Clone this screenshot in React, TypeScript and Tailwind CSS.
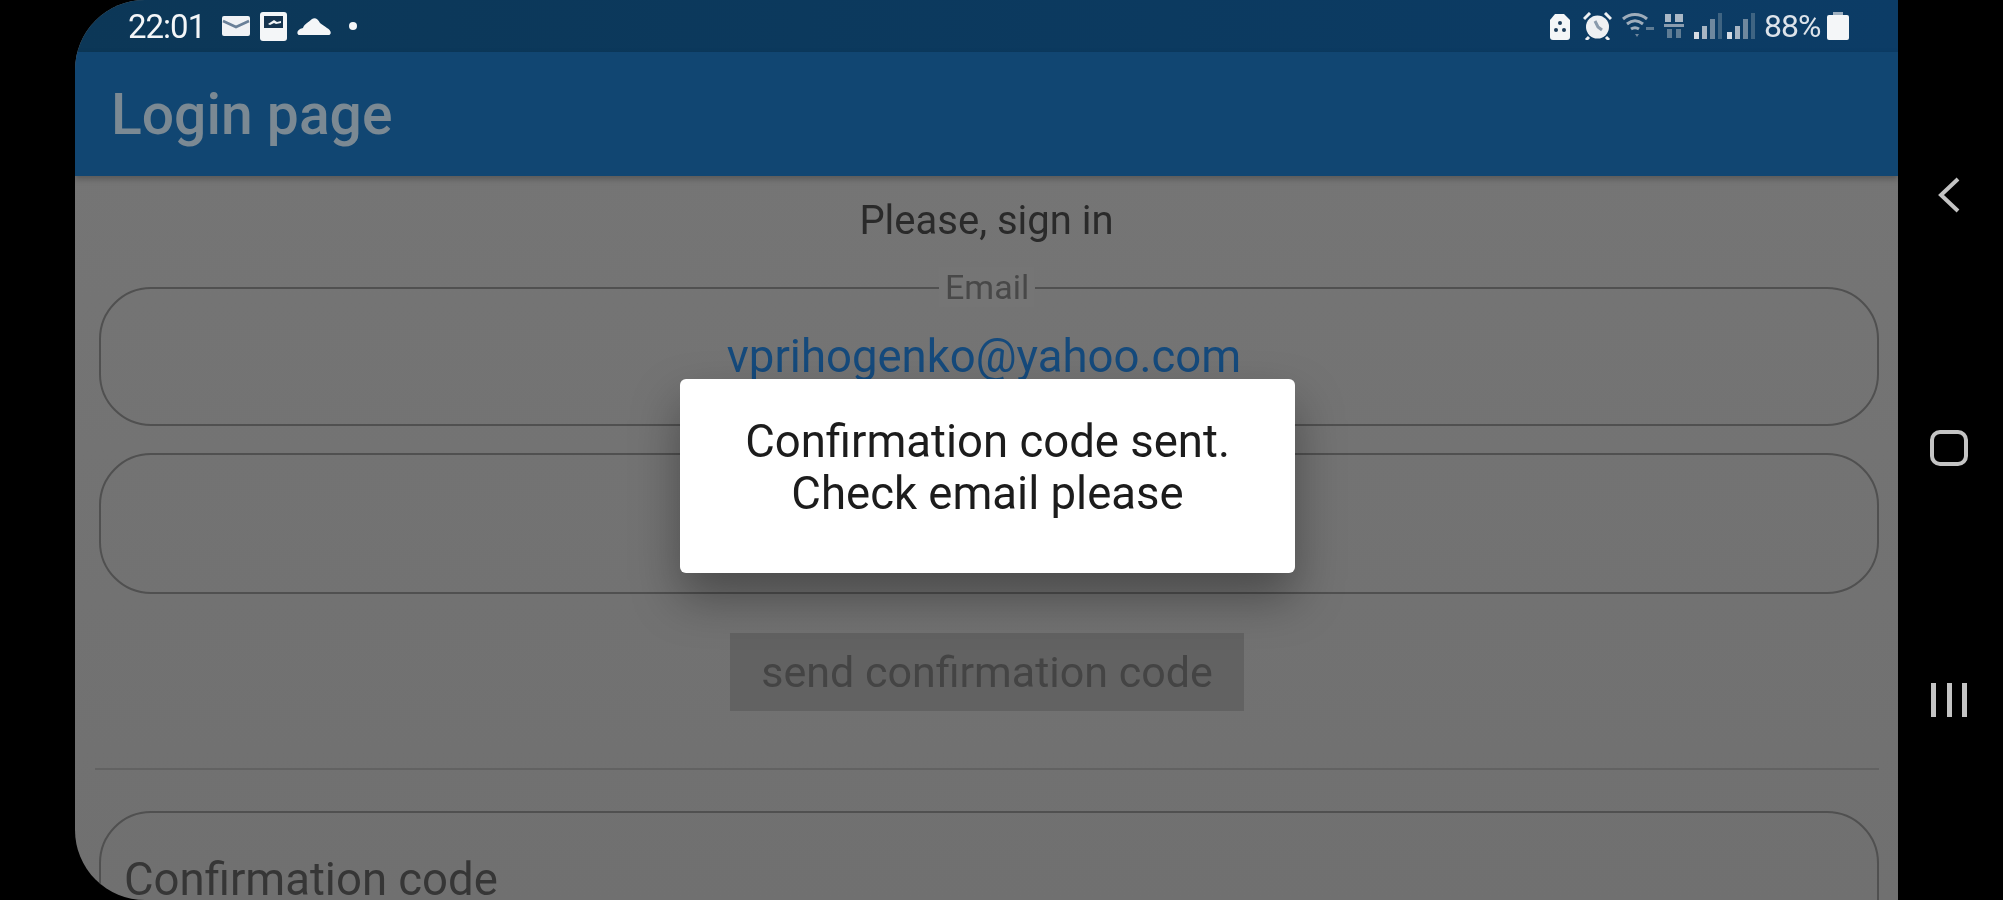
const roboto = "font-['Roboto',sans-serif]";

function Mail() {
  return (
    <svg width="28" height="20" viewBox="0 0 28 20" className="ml-[17px]">
      <rect width="28" height="20" rx="2" fill="#f0f2f5" />
      <path d="M1 5l13 6 13-6" fill="none" stroke="#6a8098" strokeWidth="2.5" />
    </svg>
  );
}

function Picture() {
  return (
    <svg width="27" height="29" viewBox="0 0 27 29" className="ml-[10px]">
      <rect width="27" height="29" rx="3" fill="#f4f6f8" />
      <rect x="4" y="4" width="19" height="12" fill="#16344f" />
      <path d="M8 12l6-4 3 2 4-1v2l-5 1-2-1-4 2z" fill="#f4f6f8" />
    </svg>
  );
}

function Cloud() {
  return (
    <svg width="34" height="18" viewBox="0 0 34 18" className="ml-[10px]">
      <path d="M2 18c-3-1-2-6 4-7 1-4 5-5 9-9 3-2 6 0 8 4 2 2 5 3 7 5 4 2 5 6 2 7z" fill="#f4f6f8" />
    </svg>
  );
}

function Lock() {
  return (
    <svg width="22" height="27" viewBox="0 0 22 27">
      <path d="M6 1h9l6 6v17a3 3 0 0 1-3 3H4a3 3 0 0 1-3-3V7z" fill="#f4f6f8" />
      <circle cx="11" cy="10" r="2" fill="#1c3c5a" />
      <circle cx="7" cy="17" r="2" fill="#1c3c5a" />
      <circle cx="15" cy="17" r="2" fill="#1c3c5a" />
    </svg>
  );
}

function Alarm() {
  return (
    <svg width="29" height="28" viewBox="0 0 29 28" className="ml-[12px]">
      <circle cx="14.5" cy="15" r="11.5" fill="#eef0f3" />
      <path d="M12 9l3 6 4 3" fill="none" stroke="#8a9aac" strokeWidth="3" />
      <path d="M1 7l6-6M28 7l-6-6M6 25l-3 3M23 25l3 3" stroke="#eef0f3" strokeWidth="3" />
    </svg>
  );
}

function Wifi() {
  return (
    <svg width="33" height="26" viewBox="0 0 33 26" className="ml-[10px]">
      <path d="M1 6c7-6 17-6 24 0M5 11c5-4 11-4 16 0M9 16c3-2 5-2 8 0" fill="none" stroke="#9fadbb" strokeWidth="3" />
      <path d="M13 21l2 3 2-3z" fill="#6f869c" />
      <rect x="24" y="14" width="8" height="3" fill="#5f7c94" />
    </svg>
  );
}

function FourG() {
  return (
    <svg width="22" height="28" viewBox="0 0 22 28" className="ml-[8px]">
      <path d="M2 2h6v8H2zM12 2h8v8h-8z" fill="#aab8c6" />
      <path d="M1 12h20v3H1z" fill="#8a9cae" />
      <path d="M4 17h5v9H4zM13 17h5v9h-5z" fill="#5f7c94" />
    </svg>
  );
}

function Signal({ className }: { className: string }) {
  return (
    <svg width="28" height="26" viewBox="0 0 28 26" className={className}>
      <rect x="0" y="19" width="5" height="7" fill="#d6dce4" />
      <rect x="8" y="13" width="5" height="13" fill="#a8b6c4" />
      <rect x="16" y="6" width="5" height="20" fill="#6f889e" />
      <rect x="24" y="0" width="4" height="26" fill="#3f6482" />
    </svg>
  );
}

function Battery() {
  return (
    <svg width="22" height="28" viewBox="0 0 22 28" className="ml-[4px]">
      <path d="M6 0h10v3H6z" fill="#9fb0c0" />
      <rect y="3" width="22" height="25" rx="2" fill="#f4f6f8" />
    </svg>
  );
}

function StatusBar() {
  return (
    <div className={`flex h-[52px] shrink-0 items-center justify-between bg-gradient-to-r from-[#0c3757] to-[#0c3c66] pl-[53px] pr-[49px] ${roboto}`}>
      <div className="flex items-center">
        <span className="w-[77px] whitespace-nowrap text-[33px] leading-none tracking-[-1px] text-[#f4f6f8]">22:01</span>
        <Mail />
        <Picture />
        <Cloud />
        <span className="ml-[18px] h-[8px] w-[8px] rounded-full bg-[#f4f6f8]" />
      </div>
      <div className="flex items-center">
        <Lock />
        <Alarm />
        <Wifi />
        <FourG />
        <Signal className="ml-[9px]" />
        <Signal className="ml-[5px]" />
        <span className="ml-[9px] w-[59px] whitespace-nowrap text-[32px] leading-none tracking-[-1px] text-[#dde3ea]">88%</span>
        <Battery />
      </div>
    </div>
  );
}

function Field({ className, children }: { className: string; children?: React.ReactNode }) {
  return <div className={`relative rounded-[52px] border-2 border-[#505050] ${className}`}>{children}</div>;
}

function NavBar() {
  return (
    <div className="flex w-[105px] shrink-0 flex-col items-center pr-[3px] pt-[177px]">
      <svg width="24" height="36" viewBox="0 0 24 36">
        <path d="M21 2L4 18l17 16" fill="none" stroke="#c4c4c4" strokeWidth="4" />
      </svg>
      <div className="mt-[217px] h-[36px] w-[38px] rounded-[10px] border-[4px] border-[#c4c4c4]" />
      <div className="mt-[217px] flex h-[34px] w-[36px] justify-between">
        <span className="w-[5px] bg-[#c4c4c4]" />
        <span className="w-[5px] bg-[#c4c4c4]" />
        <span className="w-[5px] bg-[#c4c4c4]" />
      </div>
    </div>
  );
}

export default function App() {
  return (
    <div className={`flex h-[900px] w-[2003px] overflow-hidden bg-black pl-[75px] blur-[0.6px] ${roboto}`}>
      <div className="relative flex w-[1823px] shrink-0 flex-col overflow-hidden rounded-l-[70px] bg-gradient-to-b from-[#767676] to-[#707070]">
        <StatusBar />
        <div className="flex h-[124px] shrink-0 items-center bg-[#114672] pl-[36px] shadow-[0_3px_6px_rgba(0,0,0,0.25)]">
          <span className="text-[57px] font-medium leading-none text-[#7b8993]">Login page</span>
        </div>

        <div className="flex flex-1 flex-col pl-[24px] pr-[19px]">
          <p className="mt-[23px] pr-[5px] text-center text-[40px] leading-[44px] text-[#2a2a2a]">Please, sign in</p>

          <Field className="mt-[44px] flex h-[139px] shrink-0 items-center justify-center">
            <span className="absolute -top-[22px] left-1/2 -translate-x-[52%] bg-[#757575] px-[6px] text-[34px] leading-[40px] text-[#484848]">Email</span>
            <span className="pr-[10px] text-[45.5px] leading-none text-[#154a7c]">vprihogenko@yahoo.com</span>
          </Field>
          <Field className="mt-[27px] h-[141px] shrink-0" />

          <button className="ml-[631px] mt-[39px] h-[78px] w-[514px] shrink-0 bg-[#626262] text-[43px] leading-none text-[#444444]">send confirmation code</button>

          <div className="-ml-[4px] mt-[57px] h-[2px] shrink-0 bg-[#626262]" />

          <Field className="mt-[41px] h-[139px] shrink-0 pl-[23px] pt-[45px]">
            <span className="whitespace-nowrap text-[45.5px] leading-[44px] text-[#363636]">Confirmation code</span>
          </Field>
        </div>

        <div className="absolute left-[605px] top-[379px] flex h-[194px] w-[615px] flex-col items-center rounded-[6px] bg-white pt-[37px] text-center text-[45.5px] leading-[52px] text-[#1c1c1c] shadow-[0_24px_48px_rgba(0,0,0,0.35)]">
          <span>Confirmation code sent.</span>
          <span>Check email please</span>
        </div>
      </div>
      <NavBar />
    </div>
  );
}
